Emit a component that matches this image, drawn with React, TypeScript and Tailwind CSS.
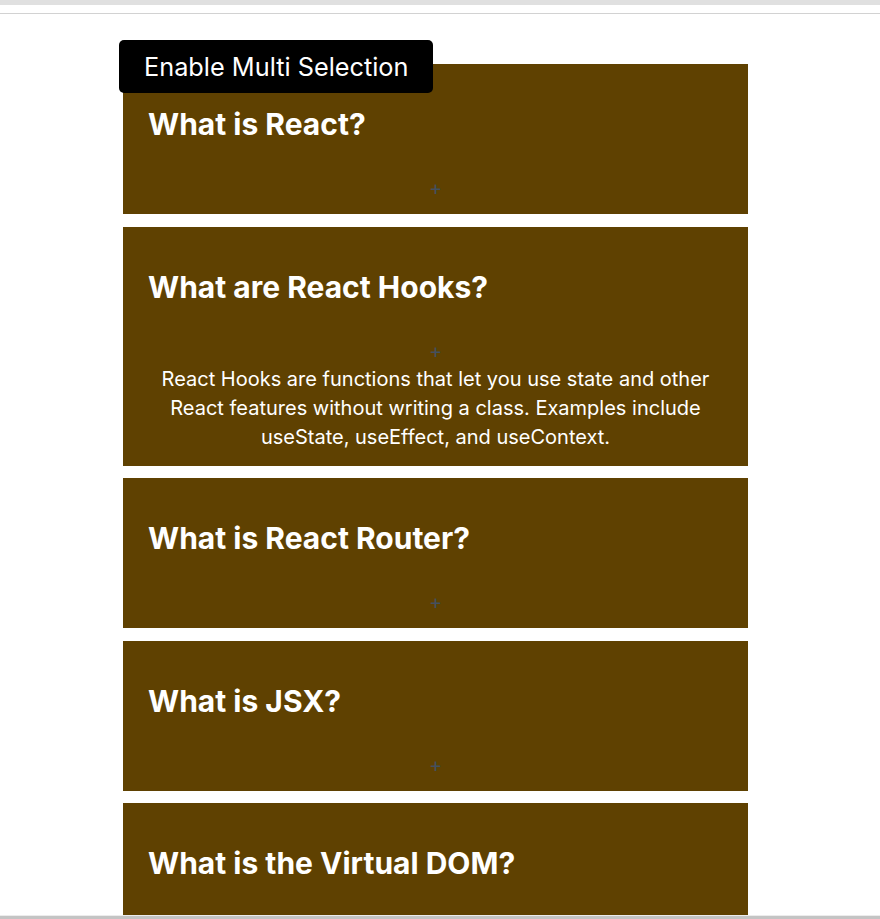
import { useState } from "react";

const faqs = [
  {
    q: "What is React?",
    a: "React is a JavaScript library for building user interfaces, maintained by Meta and a community of developers.",
  },
  {
    q: "What are React Hooks?",
    a: "React Hooks are functions that let you use state and other React features without writing a class. Examples include useState, useEffect, and useContext.",
  },
  {
    q: "What is React Router?",
    a: "React Router is a library for routing in React apps, letting you map URLs to components.",
  },
  {
    q: "What is JSX?",
    a: "JSX is a syntax extension that lets you write HTML-like markup inside JavaScript.",
  },
  {
    q: "What is the Virtual DOM?",
    a: "The Virtual DOM is a lightweight copy of the real DOM that React uses to work out the minimal set of updates.",
  },
];

export default function App() {
  const [multi, setMulti] = useState(false);
  const [open, setOpen] = useState<number[]>([1]);

  function toggle(i: number) {
    if (multi) {
      setOpen((prev) => (prev.includes(i) ? prev.filter((x) => x !== i) : [...prev, i]));
    } else {
      setOpen((prev) => (prev.includes(i) ? [] : [i]));
    }
  }

  return (
    <div className="min-h-screen bg-white font-['Inter',sans-serif]">
      {/* browser-ish top strip */}
      <div className="h-[5px] bg-[#e0e0e0]" />
      <div className="h-[8px]" />
      <div className="h-px bg-[#d2d2d2]" />

      <div className="ml-[119px] pt-[26px] pb-10">
        <button
          onClick={() => setMulti((m) => !m)}
          className="relative z-10 -mb-[29px] block h-[53px] rounded-[5px] bg-black px-[25px] text-[25.3px] leading-[30px] text-white"
        >
          Enable Multi Selection
        </button>

        <div className="ml-[4px] flex w-[625px] flex-col gap-[12.6px]">
          {faqs.map((item, i) => (
            <div
              key={item.q}
              onClick={() => toggle(i)}
              className="cursor-pointer bg-[#5f4101] px-[25px] pt-[42px] pb-[14px] text-white"
            >
              <h3 className="text-[30px] font-bold leading-[36px]">{item.q}</h3>
              <div className="mt-[34px] text-center text-[20px] leading-[24px] text-[#44505f]">+</div>
              {open.includes(i) && (
                <div className="mt-[2px] px-[6px] text-center text-[20px] leading-[29px] text-white">
                  {item.a}
                </div>
              )}
            </div>
          ))}
        </div>
      </div>

      {/* bottom strip */}
      <div className="fixed bottom-0 left-0 right-0">
        <div className="h-px bg-[#ececec]" />
        <div className="h-[3px] bg-[#c4c4c4]" />
      </div>
    </div>
  );
}
